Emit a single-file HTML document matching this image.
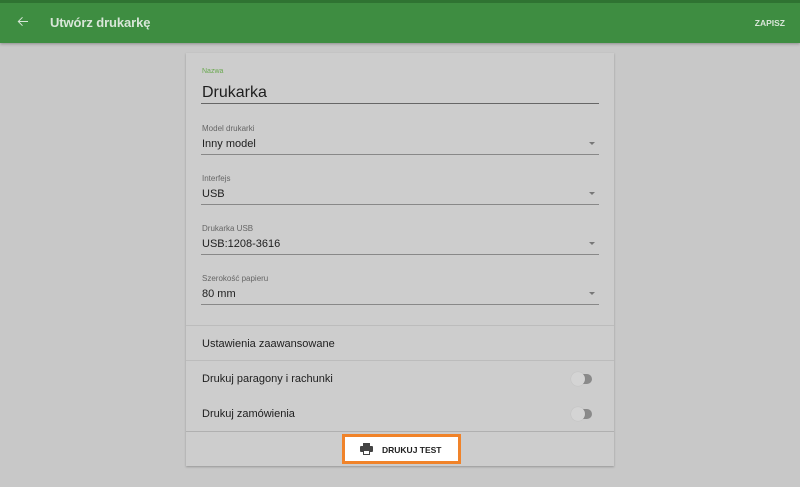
<!DOCTYPE html>
<html><head><meta charset="utf-8"><style>
*{margin:0;padding:0;box-sizing:border-box}
body{width:800px;height:487px;background:#c8c8c8;font-family:"Liberation Sans",sans-serif;position:relative;overflow:hidden;color:#1e1e1e}
.hdr{position:absolute;left:0;top:0;width:800px;height:43px;background:#3e8d41;box-shadow:0 1px 3px rgba(0,0,0,.3)}
.hdr .top{position:absolute;left:0;top:0;width:800px;height:3px;background:#2f7332}
.hdr .t{position:absolute;left:50px;top:15px;font-size:13px;font-weight:bold;color:#d8e6d8;letter-spacing:-0.1px}
.hdr .z{position:absolute;right:15px;top:18px;font-size:8.5px;font-weight:bold;color:#d8e6d8}
.card{position:absolute;left:186px;top:53px;width:428px;height:413px;background:#cdcdcd;box-shadow:0 1px 2px rgba(0,0,0,.25)}
.a{position:absolute}
.lbl{font-size:8px;color:#666}
.val{font-size:11px;color:#1e1e1e}
.ul{height:1px;background:#888;left:15px;width:398px}
.arr{width:0;height:0;border-left:3px solid transparent;border-right:3px solid transparent;border-top:3px solid #777}
.sep{left:0;width:428px;height:1px;background:#bcbcbc}
.tg{width:20px;height:10px;border-radius:5px;background:#8a8a8a}
.kn{width:14px;height:14px;border-radius:7px;background:#d4d4d4;box-shadow:0 0 1px rgba(0,0,0,.15)}
</style></head><body>
<div class="hdr"><div class="top"></div>
<svg class="a" style="left:17px;top:16px" width="12" height="11" viewBox="0 0 12 11"><path d="M11 5.5H1.5M5.5 1.3L1.3 5.5L5.5 9.7" stroke="#d8e6d8" stroke-width="1" fill="none"/></svg>
<div class="t">Utwórz drukarkę</div><div class="z">ZAPISZ</div></div>
<div class="card">
<div class="a lbl" style="left:16px;top:15px;color:#6aa84f;font-size:7px">Nazwa</div>
<div class="a" style="left:16px;top:31px;font-size:16px">Drukarka</div>
<div class="a ul" style="top:50px;height:1px;background:#666"></div>

<div class="a lbl" style="left:16px;top:71px">Model drukarki</div>
<div class="a val" style="left:16px;top:85px">Inny model</div>
<div class="a arr" style="left:403px;top:89px"></div>
<div class="a ul" style="top:101px"></div>

<div class="a lbl" style="left:16px;top:121px">Interfejs</div>
<div class="a val" style="left:16px;top:135px">USB</div>
<div class="a arr" style="left:403px;top:139px"></div>
<div class="a ul" style="top:151px"></div>

<div class="a lbl" style="left:16px;top:171px">Drukarka USB</div>
<div class="a val" style="left:16px;top:185px">USB:1208-3616</div>
<div class="a arr" style="left:403px;top:189px"></div>
<div class="a ul" style="top:201px"></div>

<div class="a lbl" style="left:16px;top:221px">Szerokość papieru</div>
<div class="a val" style="left:16px;top:235px">80 mm</div>
<div class="a arr" style="left:403px;top:239px"></div>
<div class="a ul" style="top:251px"></div>

<div class="a sep" style="top:272px"></div>
<div class="a val" style="left:16px;top:285px">Ustawienia zaawansowane</div>
<div class="a sep" style="top:307px"></div>
<div class="a val" style="left:16px;top:320px">Drukuj paragony i rachunki</div>
<div class="a tg" style="left:386px;top:321px"></div><div class="a kn" style="left:385px;top:319px"></div>
<div class="a val" style="left:16px;top:355px">Drukuj zamówienia</div>
<div class="a tg" style="left:386px;top:356px"></div><div class="a kn" style="left:385px;top:354px"></div>
<div class="a sep" style="top:378px;background:#b0b0b0"></div>

<div class="a" style="left:156px;top:381px;width:119px;height:30px;border:3px solid #f0832a;background:#fff"></div>
<svg class="a" style="left:174px;top:390px" width="13" height="12" viewBox="0 0 13 12"><rect x="3" y="0" width="7" height="3" fill="#444"/><rect x="0" y="3" width="13" height="6" rx="1" fill="#444"/><rect x="3" y="7" width="7" height="5" fill="#444"/><rect x="4" y="8" width="5" height="3" fill="#fff"/></svg>
<div class="a" style="left:196px;top:392px;font-size:8.5px;font-weight:bold;color:#222">DRUKUJ TEST</div>
</div>
</body></html>
